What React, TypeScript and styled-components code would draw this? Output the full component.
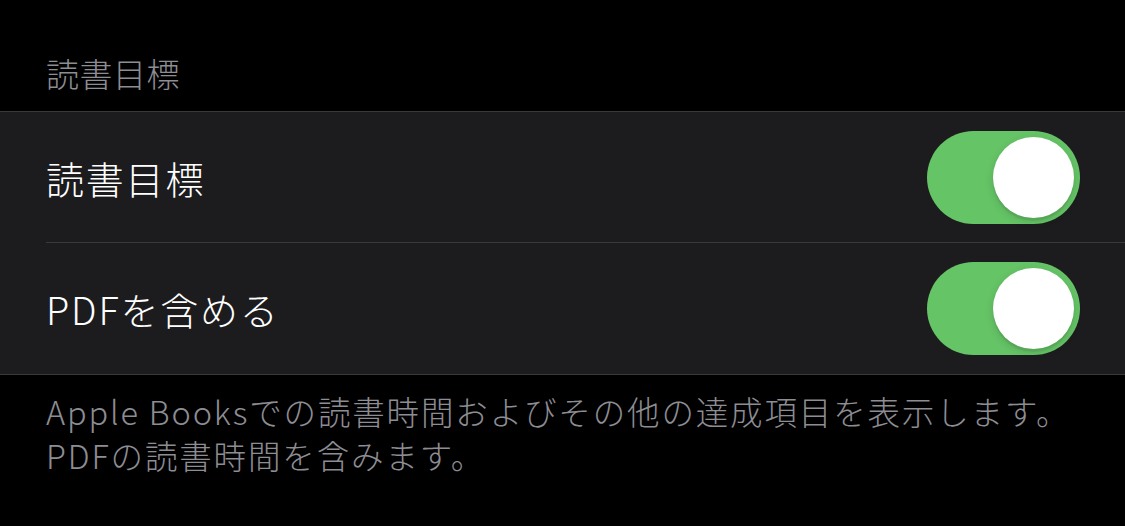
import styled, { createGlobalStyle } from "styled-components";

const GlobalStyle = createGlobalStyle`
  html, body {
    margin: 0;
    padding: 0;
    background: #000;
  }
  body {
    font-family: "Noto Sans CJK JP", "Noto Sans", sans-serif;
  }
`;

const Page = styled.div`
  width: 1125px;
  height: 526px;
  background: #000;
  overflow: hidden;
`;

const SectionHeader = styled.div`
  height: 112px;
  box-sizing: border-box;
  padding: 51px 0 0 46px;
  font-size: 33px;
  line-height: 44px;
  font-weight: 300;
  letter-spacing: 0.5px;
  color: #8d8d93;
  border-bottom: 1px solid #3a3a3c;
`;

const Group = styled.div`
  background: #1c1c1e;
  border-bottom: 1px solid #3a3a3c;
  padding-left: 46px;
`;

const Row = styled.div<{ $divider?: boolean }>`
  height: 131px;
  box-sizing: border-box;
  display: flex;
  align-items: center;
  justify-content: space-between;
  padding-right: 45px;
  border-bottom: ${(p) => (p.$divider ? "1px solid #3a3a3c" : "none")};
`;

const Label = styled.span`
  font-size: 38px;
  font-weight: 300;
  color: #fff;
  letter-spacing: 1.8px;
`;

const Switch = styled.div<{ $on: boolean }>`
  width: 153px;
  height: 93px;
  border-radius: 47px;
  background: ${(p) => (p.$on ? "#65c466" : "#39393d")};
  position: relative;
  flex-shrink: 0;
`;

const Knob = styled.div`
  position: absolute;
  top: 6px;
  right: 6px;
  width: 81px;
  height: 81px;
  border-radius: 50%;
  background: #fff;
  box-shadow: 0 3px 8px rgba(0, 0, 0, 0.15), 0 3px 1px rgba(0, 0, 0, 0.06);
`;

const Footer = styled.div`
  padding: 14px 30px 0 46px;
  font-size: 32.5px;
  line-height: 44px;
  font-weight: 300;
  letter-spacing: 1.85px;
  color: #8d8d93;
  white-space: nowrap;
`;

function Toggle({ on }: { on: boolean }) {
  return (
    <Switch $on={on}>
      <Knob />
    </Switch>
  );
}

export default function App() {
  return (
    <Page>
      <GlobalStyle />
      <SectionHeader>読書目標</SectionHeader>
      <Group>
        <Row $divider>
          <Label>読書目標</Label>
          <Toggle on />
        </Row>
        <Row>
          <Label>PDFを含める</Label>
          <Toggle on />
        </Row>
      </Group>
      <Footer>
        Apple Booksでの読書時間およびその他の達成項目を表示します。
        <br />
        PDFの読書時間を含みます。
      </Footer>
    </Page>
  );
}
